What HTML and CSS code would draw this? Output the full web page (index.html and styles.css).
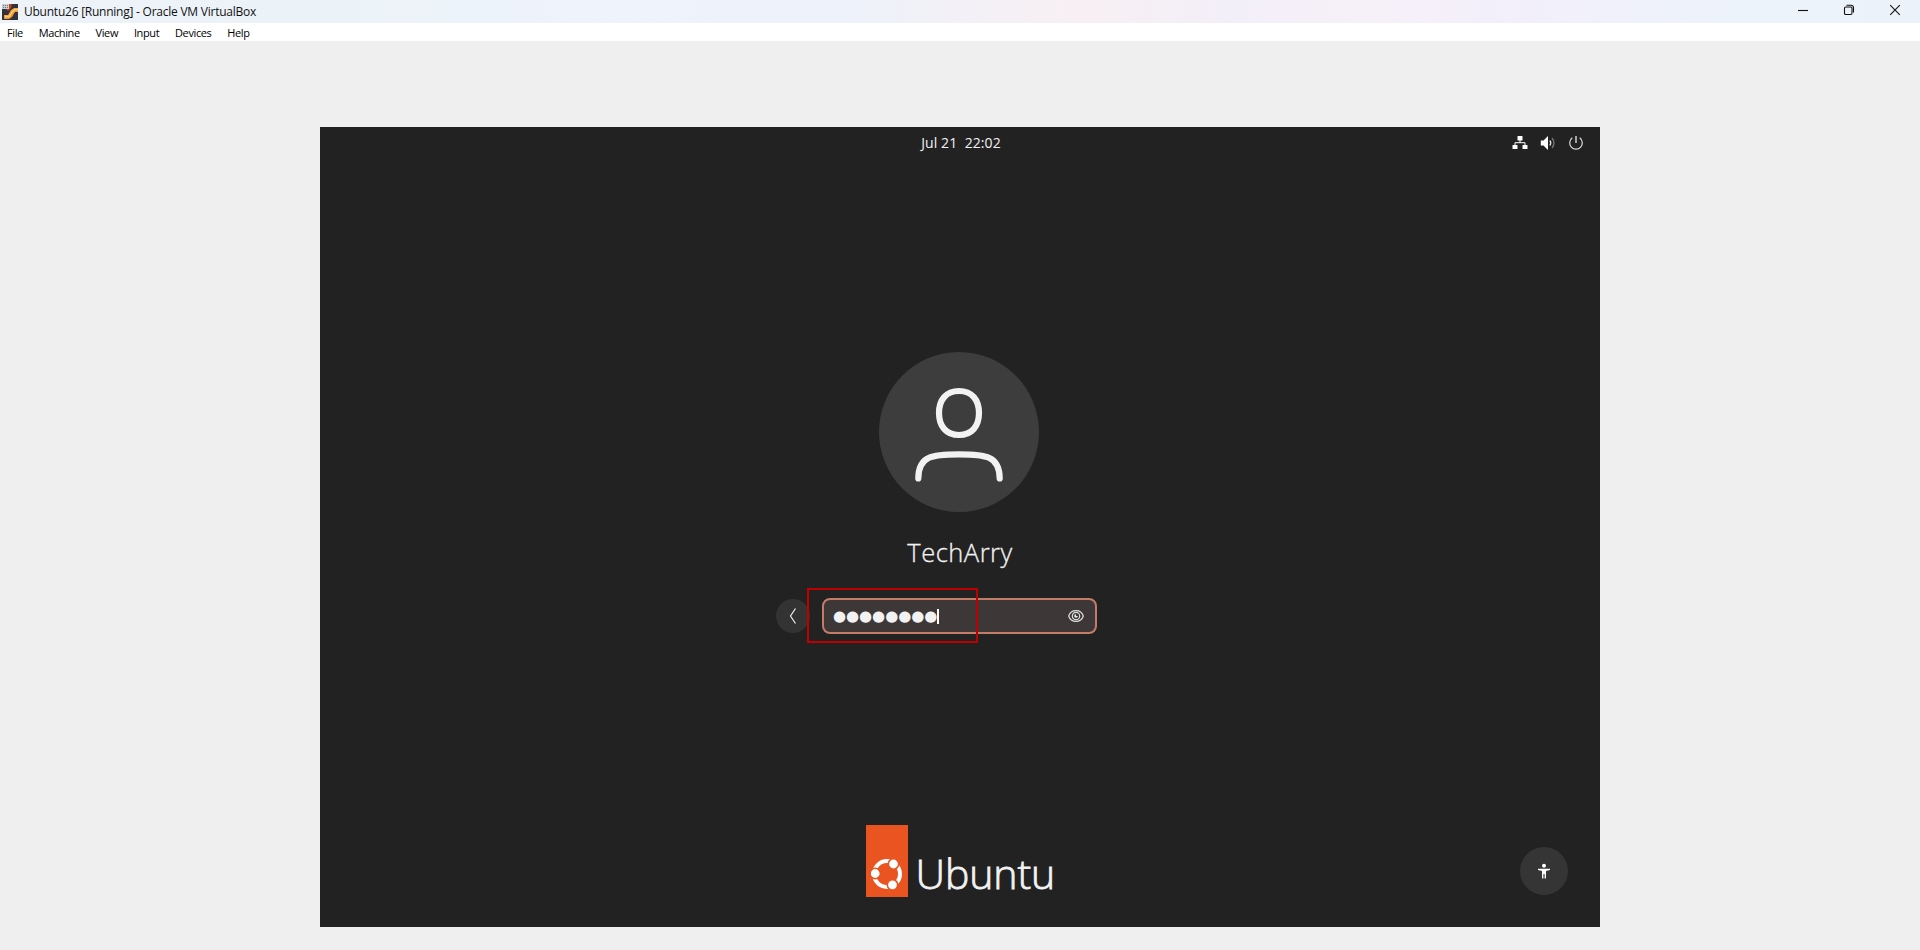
FILE: index.html
```html
<!DOCTYPE html>
<html lang="en">
<head>
<meta charset="utf-8">
<title>Ubuntu26 [Running] - Oracle VM VirtualBox</title>
<link rel="stylesheet" href="styles.css">
</head>
<body>
<header class="titlebar">
  <svg class="app-icon" width="16" height="16" viewBox="0 0 16 16"><rect width="16" height="16" fill="#30323c"/><path d="M6 0h4l-1 4-3 3-2-2Z" fill="#c4451c"/><path d="M2 11h4l3-5 3-2h4v4h-3l-3 5-3 2H2Z" fill="#f49a35"/><path d="M3 12.500h4l3.500-5L13 5.500h3" fill="none" stroke="#ffd27a" stroke-width="1.300"/><rect width="7" height="5" fill="#c9ccd2"/><path d="M1 1.500h5M1 3.500h5" stroke="#777" stroke-dasharray="1 1"/></svg>
  <span class="title">Ubuntu26 [Running] - Oracle VM VirtualBox</span>
  <div class="controls">
    <svg width="12" height="12" viewBox="0 0 12 12"><path d="M1 6.500h10"/></svg>
    <svg width="12" height="12" viewBox="0 0 12 12"><rect x="1.500" y="3" width="7.500" height="7.500" rx="1.200"/><path d="M3.500 1.200h4.500a2.500 2.500 0 0 1 2.500 2.500v4.800"/></svg>
    <svg width="12" height="12" viewBox="0 0 12 12"><path d="m1.200 1.200 9.600 9.600m0-9.600-9.600 9.600"/></svg>
  </div>
</header>
<nav class="menubar"><span>File</span><span>Machine</span><span>View</span><span>Input</span><span>Devices</span><span>Help</span></nav>
<main class="screen">
  <div class="topbar">
    <span class="clock">Jul 21&nbsp; 22:02</span>
    <div class="status">
      <svg width="16" height="16" viewBox="0 0 16 16" fill="#fff"><rect x="5.500" y="1" width="5" height="4.500" rx=".6"/><rect x=".5" y="10" width="5" height="4" rx=".6"/><rect x="10.500" y="10" width="5" height="4" rx=".6"/><path d="M8 5v3M3 10.500V7.700h10v2.800" fill="none" stroke="#fff"/></svg>
      <svg width="16" height="16" viewBox="0 0 16 16"><path d="M.8 5.500h2.700L8 1v14l-4.500-4.500H.8Z" fill="#fff"/><path d="M9.800 5.500a4 4 0 0 1 0 5" fill="none" stroke="#ddd" stroke-width="1.300"/><path d="M12 3a7.500 7.500 0 0 1 0 10" fill="none" stroke="#777" stroke-width="1.300"/></svg>
      <svg width="16" height="16" viewBox="0 0 16 16" fill="none" stroke="#ddd" stroke-width="1.200"><path d="M4.300 2.800a6.300 6.300 0 1 0 7.400 0"/><path d="M8 1v7" stroke="#fff"/></svg>
    </div>
  </div>
  <section class="login">
    <svg class="avatar" width="160" height="160" viewBox="0 0 160 160"><circle cx="80" cy="80" r="80" fill="#3d3d3d"/><g fill="none" stroke="#f2f2f2" stroke-width="6.200" stroke-linecap="round"><path d="M80 39C93 39 100 48 100 61S93 83 80 83 60 74 60 61 67 39 80 39Z"/><path d="M39.300 126.500C39.300 104 53 102.300 80 102.300s40.700 1.700 40.700 24.200"/></g></svg>
    <h1 class="name">TechArry</h1>
    <div class="auth">
      <div class="back"><svg width="8" height="16" viewBox="0 0 8 16"><path d="M6.500 .5 1.500 8l5 7.500" fill="none" stroke="#eee" stroke-width="1.200"/></svg></div>
      <div class="entry"><span class="dots">●●●●●●●●</span><i class="caret"></i>
        <svg class="eye" width="16" height="14" viewBox="0 0 16 14" fill="none" stroke="#ddd"><path d="M.7 7C3-.2 13-.2 15.300 7 13 14.200 3 14.200 .7 7Z" stroke-width="1.200"/><circle cx="8" cy="7" r="3.700" stroke-width="1.200"/><path d="M8 5.200A1.800 1.800 0 1 0 9.800 7H8Z" fill="#eee" stroke="none"/></svg>
      </div>
      <div class="highlight"></div>
    </div>
  </section>
  <footer class="brand">
    <div class="flag"><svg width="32" height="32" viewBox="-16 -16 32 32"><circle r="13" fill="none" stroke="#fff" stroke-width="4"/><g fill="#fff" stroke="#e95420" stroke-width="1.600"><circle cx="-11.800" cy="-.500" r="5.200"/><circle cx="6.500" cy="-10" r="5.200"/><circle cx="5.500" cy="10.800" r="5.200"/></g></svg></div>
    <span class="word">Ubuntu</span>
  </footer>
  <div class="a11y"><svg width="12" height="16" viewBox="0 0 12 16" fill="#fff"><circle cx="6" cy="2.800" r="2"/><path d="M0 5.800h12v1.200L8 8v7.500H6.600V11H5.400v4.500H4V8L0 7Z"/></svg></div>
</main>
</body>
</html>
```
FILE: styles.css
```css
* { box-sizing: border-box; }
body { margin: 0; width: 1920px; height: 950px; overflow: hidden; background: #efefef; font-family: "Open Sans", "Noto Sans", sans-serif; }
svg { display: block; flex: none; }
.titlebar { height: 23px; display: flex; align-items: center; padding-left: 2px; background: linear-gradient(90deg, #edf3f9 0, #ecf3f8 340px, #eef3fc 600px, #eef2fa 840px, #f7eff3 1080px, #f3eff8 1230px, #f6f0f8 1370px, #f2effb 1530px, #edf3fb 1730px, #ebf2f9 1920px); }
.title { margin-left: 6px; font-size: 12px; line-height: 20px; color: #111; white-space: nowrap; letter-spacing: -.24px; }
.controls { margin-left: auto; display: flex; gap: 34px; padding-right: 19px; margin-top: -3px; }
.controls svg { fill: none; stroke: #111; stroke-width: 1.1; }
.menubar { height: 18px; background: #fff; display: flex; gap: 15.8px; padding-left: 7px; font: 11px/19px "Open Sans", sans-serif; letter-spacing: -.38px; color: #000; }
.screen { position: relative; width: 1280px; height: 800px; margin: 86px auto 0; background: #222; color: #f2f2f2; display: flex; flex-direction: column; align-items: center; }
.topbar { width: 100%; height: 32px; display: grid; grid-template-columns: 1fr auto 1fr; align-items: center; padding-right: 16px; }
.clock { grid-column: 2; font-size: 14px; line-height: 20px; letter-spacing: .08px; padding-left: 18px; margin-bottom: 1px; }
.status { justify-self: end; display: flex; gap: 12px; }
.login { display: flex; flex-direction: column; align-items: center; margin-top: 193px; width: 322px; }
.avatar { margin-left: -2px; }
.name { margin: 22px 0 0; font-weight: 300; font-size: 25.5px; line-height: 36px; letter-spacing: .5px; -webkit-text-stroke: .3px; }
.auth { position: relative; display: flex; align-items: center; gap: 12px; width: 322px; height: 36px; margin: 28px 46px 0 0; }
.back { width: 34px; height: 34px; border-radius: 50%; background: #333; display: grid; place-items: center; }
.entry { width: 275px; height: 36px; border: 2px solid #c27c68; border-radius: 8px; background: #3d3837; display: flex; align-items: center; padding: 0 11px 0 9px; }
.dots { width: 104px; font: 15px/20px "DejaVu Sans", sans-serif; letter-spacing: -.05px; white-space: nowrap; }
.caret { width: 2px; height: 15px; background: #fff; }
.eye { margin-left: auto; }
.highlight { position: absolute; left: 31px; top: -10px; width: 171px; height: 55px; border: 2px solid #c00000; }
.brand { display: flex; margin-top: 191px; width: 188px; height: 72px; }
.flag { flex: none; width: 42px; height: 72px; background: #e95420; display: flex; align-items: flex-end; justify-content: center; padding-bottom: 7px; }
.word { margin-left: 7.5px; align-self: flex-end; margin-bottom: -1px; font-size: 41px; line-height: 50px; font-weight: 300; letter-spacing: -.1px; -webkit-text-stroke: .8px; }
.a11y { position: absolute; right: 32px; bottom: 32px; width: 48px; height: 48px; border-radius: 50%; background: #353535; display: grid; place-items: center; }
```
